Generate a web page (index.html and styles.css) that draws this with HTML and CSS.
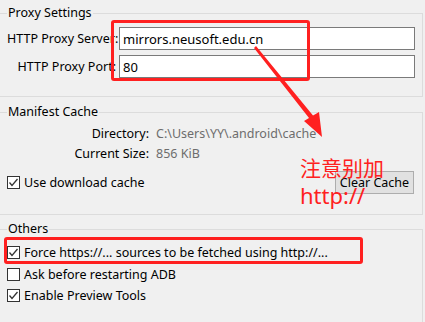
FILE: index.html
```html
<!DOCTYPE html>
<html lang="en">
<head>
    <meta charset="UTF-8">
    <meta name="viewport" content="width=device-width, initial-scale=1.0">
    <title>SDK Manager Settings</title>
    <link rel="stylesheet" href="styles.css">
</head>
<body>
    <div class="window">
        <fieldset class="group proxy">
            <legend>Proxy Settings</legend>
            <div class="form-grid">
                <label for="proxy-server">HTTP Proxy Server:</label>
                <input id="proxy-server" class="field" type="text" value="mirrors.neusoft.edu.cn" readonly>
                <label for="proxy-port">HTTP Proxy Port:</label>
                <input id="proxy-port" class="field" type="text" value="80" readonly>
            </div>
        </fieldset>

        <fieldset class="group manifest">
            <legend>Manifest Cache</legend>
            <div class="info-grid">
                <span class="key">Directory:</span>
                <span class="value">C:\Users\YY\.android\cache</span>
                <span class="key">Current Size:</span>
                <span class="value">856 KiB</span>
            </div>
            <div class="cache-row">
                <label class="check">
                    <span class="box"><svg viewBox="0 0 11 11"><polyline points="1.5,5.5 4,8.5 9.5,2"/></svg></span>
                    Use download cache
                </label>
                <button class="btn">Clear Cache</button>
            </div>
        </fieldset>

        <fieldset class="group others">
            <legend>Others</legend>
            <label class="check">
                <span class="box"><svg viewBox="0 0 11 11"><polyline points="1.5,5.5 4,8.5 9.5,2"/></svg></span>
                Force https://... sources to be fetched using http://...
            </label>
            <label class="check">
                <span class="box"></span>
                Ask before restarting ADB
            </label>
            <label class="check">
                <span class="box"><svg viewBox="0 0 11 11"><polyline points="1.5,5.5 4,8.5 9.5,2"/></svg></span>
                Enable Preview Tools
            </label>
        </fieldset>

        <!-- annotations drawn over the dialog -->
        <div class="mark mark-proxy"></div>
        <div class="mark mark-force"></div>
        <svg class="arrow" viewBox="0 0 425 322">
            <polygon points="254,48 256,46 313,115.5 319,112 322,137 304,121 309,118"/>
        </svg>
        <div class="note">
            <div class="note-cn">注意别加</div>
            <div class="note-en">http://</div>
        </div>
    </div>
</body>
</html>
```

FILE: styles.css
```css
* {
    box-sizing: border-box;
}
body {
    margin: 0;
    width: 425px;
    height: 322px;
    overflow: hidden;
    background-color: #f0f0f0;
    font-family: 'Noto Sans', 'Noto Sans CJK SC', sans-serif;
    font-size: 12.5px;
    color: #000;
}
.window {
    position: relative;
    height: 322px;
    padding-top: 5px;
}
.group {
    margin: 0 2px 0 0;
    padding: 0 7px;
    border: 1px solid #dcdcdc;
    border-left: none;
    min-width: 0;
}
.group legend {
    padding: 0 1px;
    line-height: 16px;
}
.proxy {
    padding-bottom: 18px;
    margin-bottom: 7px;
}
.form-grid {
    margin-top: 6px;
    display: grid;
    grid-template-columns: 109px 296px;
    column-gap: 3px;
    row-gap: 5px;
    align-items: center;
}
.form-grid label {
    text-align: right;
    white-space: nowrap;
}
.field {
    height: 23px;
    margin: 0;
    padding: 0 3px;
    border: 1px solid #7a7a7a;
    background-color: #fff;
    font: inherit;
    font-size: 13px;
    color: #000;
    outline: none;
}
.manifest {
    padding-bottom: 20px;
    margin-bottom: 6px;
}
.info-grid {
    margin-top: 4px;
    display: grid;
    grid-template-columns: 142px auto;
    column-gap: 7px;
    line-height: 20px;
}
.key {
    text-align: right;
}
.value {
    color: #6d6d6d;
}
.cache-row {
    margin-top: 7px;
    height: 23px;
    display: flex;
    justify-content: space-between;
    align-items: center;
}
.btn {
    width: 79px;
    height: 23px;
    margin: 0 1px 0 0;
    padding: 0;
    border: 1px solid #adadad;
    background-color: #e1e1e1;
    font: inherit;
    color: #000;
}
.others {
    height: 110px;
    padding-top: 5px;
}
.check {
    display: flex;
    align-items: center;
    gap: 4px;
    height: 21.5px;
    white-space: nowrap;
}
.cache-row .check {
    height: 23px;
}
.box {
    width: 13px;
    height: 13px;
    flex: none;
    border: 1px solid #333;
    background-color: #fff;
}
.box svg {
    display: block;
    width: 11px;
    height: 11px;
}
.box polyline {
    fill: none;
    stroke: #333;
    stroke-width: 1.3;
}
.mark {
    position: absolute;
    border: 3px solid #ff2020;
    border-radius: 3px;
}
.mark-proxy {
    left: 111px;
    top: 20px;
    width: 199px;
    height: 61px;
}
.mark-force {
    left: 4px;
    top: 237px;
    width: 359px;
    height: 27px;
}
.arrow {
    position: absolute;
    left: 0;
    top: 0;
    width: 425px;
    height: 322px;
    pointer-events: none;
}
.arrow polygon {
    fill: #ff2020;
}
.note {
    position: absolute;
    left: 300px;
    top: 157px;
    color: #ff2020;
}
.note-cn {
    font-family: 'Noto Sans CJK SC', sans-serif;
    font-size: 21px;
    line-height: 21px;
}
.note-en {
    margin-top: 4px;
    font-family: 'Noto Sans', sans-serif;
    font-size: 22px;
    line-height: 26px;
}
```
